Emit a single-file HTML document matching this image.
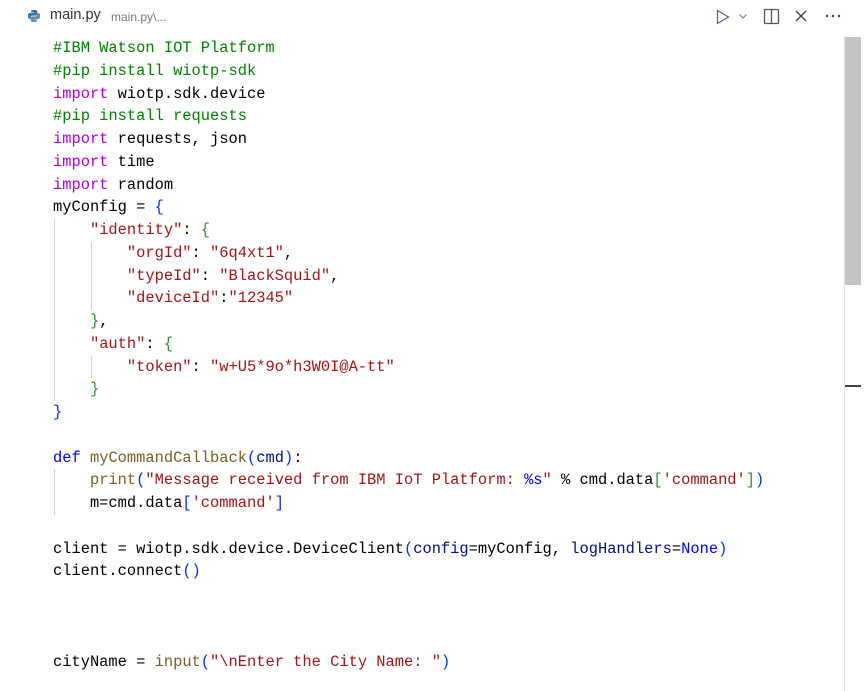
<!DOCTYPE html>
<html><head><style>
html,body{margin:0;padding:0;background:#fff;width:865px;height:691px;overflow:hidden;position:relative}
.tab{position:absolute;top:0;left:0;height:35px;width:865px;font-family:"Liberation Sans",sans-serif}
.code{position:absolute;left:53px;top:37px;font-family:"Liberation Mono",monospace;font-size:15.4px;line-height:22.75px;white-space:pre;color:#000}
.c{color:#008000}.k{color:#af00db}.d{color:#0000ff}.s{color:#a31515}.f{color:#795e26}.v{color:#001080}
.b1{color:#0431fa}.b2{color:#319331}.b3{color:#7b3814}.n{color:#0000ff}
.g{position:absolute;width:1px;background:#d3d3d3}
</style></head><body>
<div class="tab">
<svg style="position:absolute;left:27px;top:9px" width="14" height="14" viewBox="0 0 16 16"><path d="M7.9 1C4.5 1 4.7 2.5 4.7 2.5V4h3.3v.5H3.4S1 4.2 1 7.9s2.1 3.5 2.1 3.5h1.2V9.7s-.1-2.1 2-2.1h3.4s2 0 2-1.9V2.9S12 1 7.9 1z" fill="#3a76a7"/><path d="M8.1 15c3.4 0 3.2-1.5 3.2-1.5V12H8v-.5h4.6S15 11.8 15 8.1s-2.1-3.5-2.1-3.5h-1.2v1.7s.1 2.1-2 2.1H6.3s-2 0-2 1.9v2.8S4 15 8.1 15z" fill="#6a8ca8"/></svg>
<span style="position:absolute;left:50px;top:7px;font-size:14.5px;color:#333">main.py</span>
<span style="position:absolute;left:111px;top:10px;font-size:12px;color:#777">main.py\...</span>
<svg style="position:absolute;left:716px;top:9px" width="14" height="16" viewBox="0 0 14 16"><path d="M1.5 1.5v13l11-6.5z" fill="none" stroke="#6a4fa0" stroke-width="1.2"/></svg>
<svg style="position:absolute;left:738px;top:12px" width="10" height="8" viewBox="0 0 10 8"><path d="M1.5 2.5l3.5 3.5 3.5-3.5" fill="none" stroke="#777" stroke-width="1"/></svg>
<svg style="position:absolute;left:763px;top:8px" width="17" height="17" viewBox="0 0 17 17"><rect x="1.5" y="1.5" width="14" height="14" rx="1" fill="none" stroke="#555" stroke-width="1.3"/><path d="M8.5 1.5v14" stroke="#555" stroke-width="1.3"/></svg>
<svg style="position:absolute;left:795px;top:10px" width="12" height="12" viewBox="0 0 12 12"><path d="M1 1l10 10M11 1L1 11" stroke="#444" stroke-width="1.3"/></svg>
<svg style="position:absolute;left:825px;top:14px" width="16" height="4" viewBox="0 0 16 4"><circle cx="2" cy="2" r="1.2" fill="#444"/><circle cx="8" cy="2" r="1.2" fill="#444"/><circle cx="14" cy="2" r="1.2" fill="#444"/></svg>
</div>
<div style="position:absolute;left:844px;top:36px;width:1px;height:655px;background:#e5e5e5"></div>
<div style="position:absolute;left:845px;top:37px;width:16px;height:248px;background:#c4c4c4"></div>
<div style="position:absolute;left:845px;top:385px;width:16px;height:2px;background:#444"></div>
<div class="g" style="left:54px;top:219px;height:182px"></div>
<div class="g" style="left:91px;top:242px;height:68px"></div>
<div class="g" style="left:91px;top:356px;height:22px"></div>
<div class="g" style="left:54px;top:469px;height:46px"></div>
<div class="code"><span class="c">#IBM Watson IOT Platform</span>
<span class="c">#pip install wiotp-sdk</span>
<span class="k">import</span> wiotp.sdk.device
<span class="c">#pip install requests</span>
<span class="k">import</span> requests, json
<span class="k">import</span> time
<span class="k">import</span> random
myConfig = <span class="b1">{</span>
    <span class="s">"identity"</span>: <span class="b2">{</span>
        <span class="s">"orgId"</span>: <span class="s">"6q4xt1"</span>,
        <span class="s">"typeId"</span>: <span class="s">"BlackSquid"</span>,
        <span class="s">"deviceId"</span>:<span class="s">"12345"</span>
    <span class="b2">}</span>,
    <span class="s">"auth"</span>: <span class="b2">{</span>
        <span class="s">"token"</span>: <span class="s">"w+U5*9o*h3W0I@A-tt"</span>
    <span class="b2">}</span>
<span class="b1">}</span>

<span class="d">def</span> <span class="f">myCommandCallback</span><span class="b1">(</span><span class="v">cmd</span><span class="b1">)</span>:
    <span class="f">print</span><span class="b1">(</span><span class="s">"Message received from IBM IoT Platform: </span><span class="d">%s</span><span class="s">"</span> % cmd.data<span class="b2">[</span><span class="s">'command'</span><span class="b2">]</span><span class="b1">)</span>
    m=cmd.data<span class="b1">[</span><span class="s">'command'</span><span class="b1">]</span>

client = wiotp.sdk.device.DeviceClient<span class="b1">(</span><span class="v">config</span>=myConfig, <span class="v">logHandlers</span>=<span class="n">None</span><span class="b1">)</span>
client.connect<span class="b1">()</span>



cityName = <span class="f">input</span><span class="b1">(</span><span class="s">"\nEnter the City Name: "</span><span class="b1">)</span></div>
</body></html>
